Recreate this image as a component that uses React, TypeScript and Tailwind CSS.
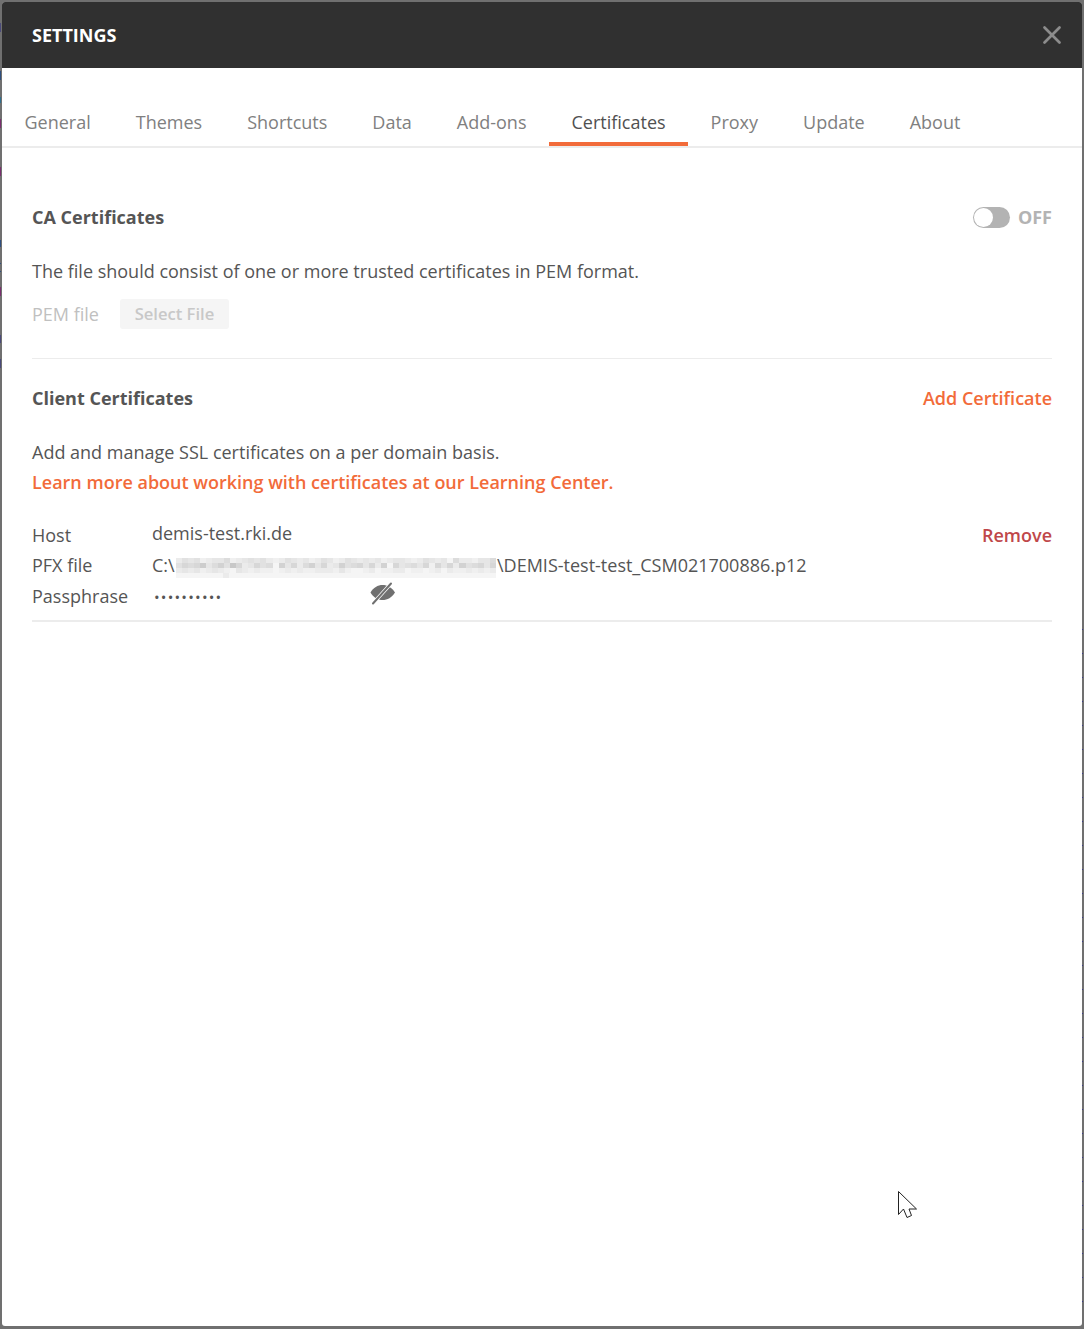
import { X } from 'lucide-react';

const tabs = ['General', 'Themes', 'Shortcuts', 'Data', 'Add-ons', 'Certificates', 'Proxy', 'Update', 'About'];

// rough mosaic for the redacted part of the file path
const mosaic = [
  'dbcbedccaedcbcbdedbcdcedbcedbcdcdcedccdedbcdcfaddecca',
  'b9a97ca8b69dc9baf8c9da8c9dc8ba9c9d8f9cbac9e9c9d8ba9c9',
  'dcdcedcdefcdedeefededeedddeceffedfeeddfeefedfdeededed',
  'ffffffffdfffffffffffffffffffffffffffffffffffffffffffff',
];

// stray bits of the window behind the dialog
const leftMarks = [
  { top: 23, height: 9, color: '#4a4a7a' },
  { top: 71, height: 9, color: '#2f4f7f' },
  { top: 97, height: 6, color: '#2f6f8f' },
  { top: 119, height: 9, color: '#7a2f6f' },
  { top: 167, height: 9, color: '#7a2f6f' },
  { top: 240, height: 7, color: '#2f4f7f' },
  { top: 263, height: 1, color: '#2f4f7f' },
  { top: 271, height: 1, color: '#2f4f7f' },
  { top: 287, height: 9, color: '#7a2f6f' },
  { top: 335, height: 8, color: '#4a4a7a' },
  { top: 359, height: 9, color: '#4a4a7a' },
];

function Redacted() {
  return (
    <div className="mt-[5px] flex h-[20px] w-[320px] flex-col">
      {mosaic.map((row, i) => (
        <div key={i} className="flex flex-1">
          {row.split('').map((c, j) => {
            const v = 170 + parseInt(c, 16) * 5;
            return <span key={j} className="flex-1" style={{ background: `rgb(${v},${v},${v})` }} />;
          })}
        </div>
      ))}
    </div>
  );
}

export default function App() {
  return (
    <div className="relative h-[1329px] w-[1084px] bg-[#707070] pt-[2px] pl-[2px] pr-[2px] pb-[3px] font-['Open_Sans',sans-serif] text-[18px] text-[#555555]">
      {leftMarks.map(mark => (
        <div key={mark.top} className="absolute left-0 w-[1px]" style={{ top: mark.top, height: mark.height, background: mark.color }} />
      ))}
      <div className="absolute right-[1px] top-[629px] bottom-[6px] w-[1px] bg-[repeating-linear-gradient(to_bottom,#3a3a8a_0,#3a3a8a_1px,transparent_1px,transparent_24px)]" />

      <div className="relative flex h-full flex-col overflow-hidden rounded-[3px] bg-white">
        <header className="flex h-[66px] items-center justify-between bg-[#303030] pl-[30px] pr-[15px]">
          <h1 className="text-[18px] font-bold text-white">SETTINGS</h1>
          <X className="h-[30px] w-[30px] text-[#8c8c8c]" strokeWidth={2.2} />
        </header>

        <nav className="mt-[32px] flex h-[48px] border-b-2 border-[#ececec]">
          {tabs.map(tab => (
            <div
              key={tab}
              className={
                tab === 'Certificates'
                  ? 'flex h-[46px] items-center border-b-4 border-[#f26b3a] px-[22.5px] pt-[2px] text-[#505050]'
                  : 'flex h-[46px] items-center px-[22.5px] pb-[2px] text-[#808080]'
              }
            >
              {tab}
            </div>
          ))}
        </nav>

        <main className="flex flex-col px-[30px]">
          <section className="flex h-[211px] flex-col border-b border-[#ececec]">
            <div className="mt-[56px] flex items-center justify-between">
              <h2 className="font-bold">CA Certificates</h2>
              <div className="flex items-center gap-[8px]">
                <div className="flex h-[21px] w-[37px] items-center rounded-full bg-[#b3b3b3]">
                  <div className="h-[19px] w-[19px] translate-x-[1px] rounded-full bg-white" />
                </div>
                <span className="font-bold text-[#b3b3b3]">OFF</span>
              </div>
            </div>
            <p className="mt-[27px]">The file should consist of one or more trusted certificates in PEM format.</p>
            <div className="mt-[14px] flex items-center gap-[21px] text-[#c0c0c0]">
              <span>PEM file</span>
              <button className="flex h-[30px] w-[109px] items-center justify-center rounded-[3px] bg-[#f5f5f5] text-[16.6px] font-semibold text-[#c8c8c8]">
                Select File
              </button>
            </div>
          </section>

          <section className="flex flex-col">
            <div className="mt-[26px] flex items-center justify-between">
              <h2 className="font-bold">Client Certificates</h2>
              <a className="font-semibold text-[#f26b3a]">Add Certificate</a>
            </div>
            <p className="mt-[25px] leading-[30px]">Add and manage SSL certificates on a per domain basis.</p>
            <a className="font-semibold leading-[30px] text-[#f26b3a]">Learn more about working with certificates at our Learning Center.</a>

            <div className="mt-[21px] flex flex-col border-b-2 border-[#ececec] pb-[9px]">
              <div className="flex h-[31px] items-center">
                <span className="w-[120px] translate-y-[2px]">Host</span>
                <span className="flex-1">demis-test.rki.de</span>
                <a className="translate-y-[2px] font-semibold text-[#c0474a]">Remove</a>
              </div>
              <div className="mt-[1px] flex h-[31px] items-center">
                <span className="w-[120px]">PFX file</span>
                <span className="w-[24px]">C:\</span>
                <Redacted />
                <span className="pl-[1px]">\DEMIS-test-test_CSM021700886.p12</span>
              </div>
              <div className="flex h-[30px] items-center">
                <span className="w-[120px]">Passphrase</span>
                <span className="w-[218px] translate-y-[1px] pl-[2px] text-[15px] tracking-[1.2px]">••••••••••</span>
                <svg viewBox="0 0 26 24" className="h-[24px] w-[26px] -translate-y-[2px] text-[#707070]">
                  <path d="M0.500 10.500C6 0.500 19 0.500 25 10.500C19 20.500 6 20.500 0.500 10.500Z" fill="currentColor" />
                  <path d="M3 21.500 21 1.500" stroke="white" strokeWidth="3.400" />
                  <path d="M3 21.500 21 1.500" stroke="currentColor" strokeWidth="2" strokeLinecap="round" />
                </svg>
              </div>
            </div>
          </section>

          <div className="flex justify-end pr-[134px] pt-[569px]">
            <svg viewBox="0 0 20 28" className="h-[28px] w-[20px]" fill="white" stroke="#222" strokeWidth="1">
              <path d="M0.500 0.500V23.500L5.500 18L9 26.500L13.500 24.500L11 18H18.500Z" />
            </svg>
          </div>
        </main>
      </div>
    </div>
  );
}
